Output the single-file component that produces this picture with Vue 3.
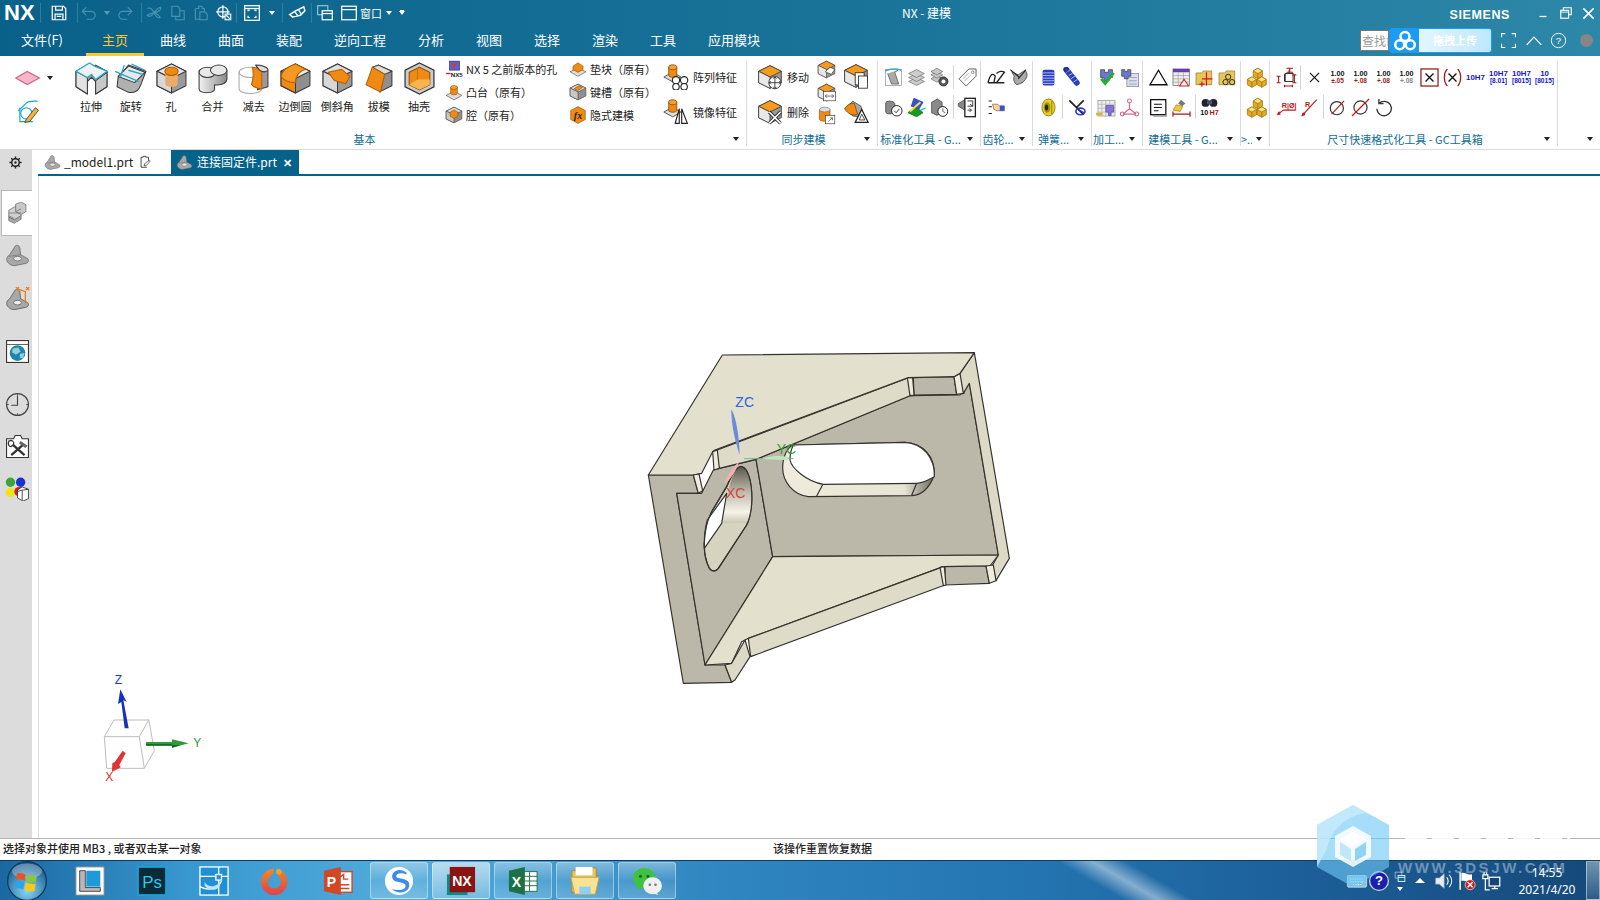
<script setup>
import { h } from 'vue'

const L = 'stroke="#3a3a3a" stroke-width="1" stroke-linejoin="round"'
const cube = (t, l, r, extra = '') =>
  `<path d="M16 2L30 9V23L16 30L2 23V9Z" fill="${r}" ${L}/><path d="M16 2L30 9L16 16L2 9Z" fill="${t}" ${L}/><path d="M2 9L16 16V30L2 23Z" fill="${l}" ${L}/>${extra}`
const wl = 'fill="none" stroke="#fff" stroke-width="2.2"'
const dl = 'fill="none" stroke="#4a93b0" stroke-width="2"'
const T = (x, y, s, c, fs, w = 700) =>
  `<text x="${x}" y="${y}" font-size="${fs}" font-weight="${w}" fill="${c}" text-anchor="middle" font-family="Liberation Sans, sans-serif">${s}</text>`
const tol = (a, b, c2 = '#a01818') => T(16, 13, '1.00', '#111', 11) + T(16, 25, b, c2, 10)
const folder = '<path d="M3 9H12L14 6H27V27H3Z" fill="#e6c65a" stroke="#8a7430"/>'
const yb = (x, y) => `<g transform="translate(${x} ${y})"><path d="M7 0L14 4V12L7 16L0 12V4Z" fill="#e8a820" stroke="#8a6a10"/><path d="M7 0L14 4L7 8L0 4Z" fill="#fbe27a" stroke="#8a6a10"/><path d="M7 8V16" stroke="#8a6a10"/></g>`

const icons = {
  save: `<path d="M4 4H24L28 8V28H4Z" ${wl}/><path d="M10 4V11H22V4M9 28V18H23V28M12 22H20" ${wl}/>`,
  undo: `<path d="M11 6L4 13L11 20M4 13H20A7 7 0 0 1 20 27H12" ${dl}/>`,
  redo: `<path d="M21 6L28 13L21 20M28 13H12A7 7 0 0 0 12 27H20" ${dl}/>`,
  cut: `<path d="M4 8C10 5 13 10 16 15C13 21 8 24 4 20C8 18 11 17 16 15C20 11 23 6 28 6C29 11 25 14 16 15C20 18 25 19 27 24C22 26 18 21 16 15" ${dl}/>`,
  copy: `<path d="M5 4H16L19 8V22H5ZM12 22V28H27V12H19" ${dl}/>`,
  paste: `<path d="M6 8H12V4H18V8H22V14M6 8V27H14M14 14H23L27 18V28H14Z" ${dl}/>`,
  snap: `<circle cx="14" cy="14" r="9" ${wl}/><path d="M14 2V26M2 14H26" ${wl}/><rect x="18" y="18" width="10" height="10" fill="#0f6a8f" stroke="#fff" stroke-width="2"/><path d="M20 20L26 26" ${wl}/>`,
  fit: `<rect x="3" y="3" width="26" height="26" ${wl}/><path d="M3 8H29" ${wl}/><path d="M9 13V11H12M23 13V11H20M9 21V24H12M23 21V24H20" ${wl}/>`,
  link: `<path d="M3 19L14 12L20 9L28 5L30 12L22 20L14 22L8 23Z" fill="none" stroke="#fff" stroke-width="2.6"/><path d="M12 14L17 20M19 11L23 17" ${wl}/>`,
  win1: `<rect x="3" y="3" width="18" height="16" fill="none" stroke="#9cc6d6" stroke-width="2"/><rect x="11" y="12" width="18" height="16" fill="#0f6a8f" stroke="#fff" stroke-width="2.2"/><path d="M11 17H29" ${wl}/>`,
  win2: `<rect x="3" y="4" width="26" height="24" ${wl}/><path d="M3 10H29" ${wl}/>`,
  plane: `<path d="M1 16L15 8L30 16L15 24Z" fill="#f6b8c8" stroke="#d8608a" stroke-width="1.5"/>`,
  sketch: `<path d="M4 16L14 6C18 3 24 4 28 4M6 12V29H22" fill="none" stroke="#12a5d8" stroke-width="1.4"/><circle cx="14" cy="19" r="7" fill="none" stroke="#12a5d8" stroke-width="1.4"/><path d="M14 26L25 12L29 15L18 29L12 30Z" fill="#f4b43a" stroke="#333"/>`,
  extrude: `<path d="M1 9L12 3L16 6L20 3L31 9V24L20 31L20 19L16 15L12 19V31L1 24Z" fill="#9a9a9a" ${L}/><path d="M1 9L12 15V31L1 24Z" fill="#e2e2e2" ${L}/><path d="M20 18L31 10V24L20 31Z" fill="#c8c8c8" ${L}/><path d="M1 9L14 1L19 4L31 9L20 17L16 12L12 15Z" fill="#f0f0f0" stroke="#22a8cf" stroke-width="1.2"/>`,
  revolve: `<path d="M4 15L14 3L31 9L26 22C24 28 20 31 13 29L3 24Z" fill="#b0b0b0" ${L}/><path d="M4 14L14 4L30 10L20 20Z" fill="#e8e8e8" ${L}/><path d="M1 9L24 19M10 3L6 15M17 2L30 8M14 8L28 12" fill="none" stroke="#22a8cf" stroke-width="1.3"/>`,
  hole: cube('#e8e8e8', '#d8d8d8', '#9a9a9a', '<path d="M10 9V21C10 25 22 25 22 21V9Z" fill="#e8ad6a"/><ellipse cx="16" cy="9" rx="6.5" ry="4" fill="#f08a12" stroke="#b85a00"/>'),
  unite: `<path d="M3 11V26C3 31 18 31 18 26L18 22C26 23 30 20 30 16V8H3Z" fill="url(#gg)" ${L}/><ellipse cx="11" cy="10" rx="8" ry="5" fill="#e8e8e8" ${L}/><ellipse cx="22" cy="8" rx="8" ry="5" fill="#e8e8e8" ${L}/>`,
  subtract: `<path d="M19 4C24 3 30 5 30 9V24L20 27V8Z" fill="#9a9a9a" ${L}/><ellipse cx="13" cy="10" rx="11" ry="5" fill="none" stroke="#aaa"/><path d="M2 10V26C2 32 24 32 24 26V10" fill="none" stroke="#aaa"/><path d="M15 5C21 6 24 8 24 10V26C20 26 17 25 14 22C16 17 16 9 15 5Z" fill="#f08a12" stroke="#b85a00"/><path d="M18 3C24 3 30 5 30 8C28 10 25 10 22 8Z" fill="#ddd" ${L}/>`,
  blend: cube('#e8e8e8', '#f08a12', '#8f8f8f', '<path d="M2 14C3 8 10 4 16 2L26 7C19 9 16 14 16 20C10 20 5 18 2 14Z" fill="#f49a20" stroke="#b85a00"/>'),
  chamfer: cube('#e0e0e0', '#d8d8d8', '#9a9a9a', '<path d="M7 10L20 7L28 14L24 21L13 18Z" fill="#f08a12" stroke="#b85a00"/>'),
  draft: `<path d="M16 3L29 9V23L17 29Z" fill="#8f8f8f" ${L}/><path d="M10 5L16 3L29 9L22 12Z" fill="#ddd" ${L}/><path d="M10 5L22 12L18 29L4 22Z" fill="#f08a12" stroke="#b85a00"/>`,
  shell: `<path d="M16 1L30 8V24L16 31L2 24V8Z" fill="#ccc" stroke="#333" stroke-width="1.2"/><path d="M16 5L26 10V22L16 27L6 22V10Z" fill="#f08a12" stroke="#8a4a00"/><path d="M6 22L14 17H26V22L16 27Z" fill="#f8b450"/><path d="M14 6V17" stroke="#c96e00"/>`,
  nx5: `<rect x="8" y="2" width="18" height="16" fill="#5a62d8" stroke="#223"/><rect x="13" y="6" width="7" height="7" fill="#d83838"/><path d="M2 24H10" stroke="#d01818" stroke-width="2.4"/>${T(21, 30, 'NX5', '#223', 11)}`,
  boss: `<path d="M2 22L16 15L30 22L16 30Z" fill="#ddd" ${L}/><path d="M10 8V18C10 22 22 22 22 18V8Z" fill="#f08a12" stroke="#8a4a00"/><ellipse cx="16" cy="8" rx="6" ry="3.5" fill="#f8a030" stroke="#8a4a00"/>`,
  pocket: cube('#d8d8d8', '#c8c8c8', '#909090', '<path d="M9 11L16 7L23 11V18L16 22L9 18Z" fill="#f08a12" stroke="#8a4a00"/>'),
  pad: `<path d="M2 21L16 14L30 21L16 29Z" fill="#ddd" ${L}/><path d="M7 11L16 5L25 11V17L16 22L7 17Z" fill="#f08a12" stroke="#8a4a00"/>`,
  slot: cube('#d8d8d8', '#c8c8c8', '#909090', '<path d="M9 10L18 5L24 8L15 14Z" fill="#f08a12" stroke="#8a4a00"/>'),
  fx: `<path d="M16 1L29 8V24L16 31L3 24V8Z" fill="#f08a12" stroke="#8a4a00"/><text x="16" y="23" font-size="18" font-style="italic" font-weight="700" text-anchor="middle" font-family="Liberation Serif, serif" fill="#222">fx</text>`,
  pattern: `<path d="M1 16L12 10L22 16L12 22Z" fill="#ddd" ${L}/><path d="M7 4V14C7 17 17 17 17 14V4Z" fill="#f08a12" stroke="#8a4a00"/><ellipse cx="12" cy="4" rx="5" ry="3" fill="#f8a030" stroke="#8a4a00"/><g fill="#fff" stroke="#222" stroke-width="1.4"><circle cx="16" cy="20" r="4.5"/><circle cx="26" cy="20" r="4.5"/><circle cx="16" cy="28" r="4"/><circle cx="26" cy="28" r="4"/></g>`,
  mirror: `<path d="M1 16L12 10L22 16L12 22Z" fill="#ddd" ${L}/><path d="M7 4V14C7 17 17 17 17 14V4Z" fill="#f08a12" stroke="#8a4a00"/><ellipse cx="12" cy="4" rx="5" ry="3" fill="#f8a030" stroke="#8a4a00"/><path d="M15 30L20 12V30ZM23 30V12L30 30Z" fill="#fff" stroke="#222" stroke-width="1.4"/>`,
  move: cube('#f79a1e', '#e8e8e8', '#989898', '<circle cx="22" cy="23" r="7.5" fill="#fff" stroke="#222"/><path d="M22 16V30M15 23H29M20 18L22 16L24 18M20 28L22 30L24 28M17 21L15 23L17 25M27 21L29 23L27 25" fill="none" stroke="#222"/>'),
  del: cube('#f79a1e', '#e8e8e8', '#989898', '<path d="M15 16L29 30M29 16L15 30" stroke="#222" stroke-width="4"/><path d="M15 16L29 30M29 16L15 30" stroke="#fff" stroke-width="2"/>'),
  sy1: cube('#f79a1e', '#e8e8e8', '#989898', '<path d="M14 20L22 12L30 16L24 24Z" fill="#fff" stroke="#222"/>'),
  sy2: cube('#f79a1e', '#e8e8e8', '#989898', '<rect x="11" y="14" width="20" height="16" fill="#fff" stroke="#222"/><path d="M14 22H28M14 22L17 19M14 22L17 25M28 22L25 19M28 22L25 25" fill="none" stroke="#222"/>'),
  sy3: `<path d="M4 6V22C4 27 22 27 22 22V6Z" fill="#f08a12" stroke="#8a4a00"/><ellipse cx="13" cy="6" rx="9" ry="4" fill="#ddd" stroke="#666"/><rect x="14" y="16" width="16" height="14" fill="#fff" stroke="#222"/><path d="M19 26L26 20M22 20H26V24" fill="none" stroke="#222"/>`,
  sy4: cube('#f79a1e', '#e8e8e8', '#989898', '<rect x="15" y="12" width="11" height="15" fill="#fff" stroke="#222"/><rect x="19" y="16" width="11" height="15" fill="#fff" stroke="#222"/>'),
  sy5: `<path d="M2 13L12 4L22 10L26 24L12 22Z" fill="#a8a8a8" ${L}/><path d="M2 13C6 8 10 6 14 7L18 20C12 22 6 20 2 13Z" fill="#f08a12" stroke="#8a4a00"/><path d="M15 30L23 14L31 30Z" fill="#fff" stroke="#222" stroke-width="1.5"/><path d="M20 27L23 20L27 27Z" fill="none" stroke="#222"/>`,
  a1: `<path d="M7 10L13 26L24 26L18 8L24 4" fill="#aaa" stroke="#444"/><rect x="4" y="4" width="24" height="24" fill="none" stroke="#888"/><path d="M4 6C12 2 20 2 28 5" fill="none" stroke="#22a8cf" stroke-width="2"/>`,
  a2: `<g fill="#ccc" stroke="#666"><path d="M4 22L16 16L28 22L16 28Z"/><path d="M4 16L16 10L28 16L16 22Z"/><path d="M4 10L16 4L28 10L16 16Z"/></g>`,
  a3: `<g fill="#c8c8c8" stroke="#666"><path d="M3 18L12 13L21 18L12 23Z"/><path d="M3 12L12 7L21 12L12 17Z"/><path d="M3 7L12 2L21 7L12 12Z"/></g><circle cx="22" cy="22" r="7" fill="#555" stroke="#222"/><circle cx="22" cy="22" r="3" fill="#fff"/>`,
  a4: `<path d="M3 18L18 3H29V14L14 29Z" fill="#fff" stroke="#555" stroke-width="1.4"/><circle cx="24" cy="8" r="2" fill="none" stroke="#555"/><path d="M9 18L18 9M12 21L21 12" stroke="#888"/>`,
  a5: `<path d="M4 10C4 5 16 5 18 10V22C16 27 4 27 4 22Z" fill="#8a8a8a" stroke="#333"/><circle cx="21" cy="21" r="8" fill="#fff" stroke="#222" stroke-width="1.5"/><path d="M17 21L20 24L25 18" fill="none" stroke="#222" stroke-width="1.4"/>`,
  a6: `<path d="M3 24L14 14L26 24L16 30Z" fill="#1a9a20" stroke="#0a5a10"/><path d="M12 2L26 8L20 18L8 14Z" fill="#3a52d8" stroke="#1a2a90"/><path d="M6 22L22 8" stroke="#f4e040" stroke-width="3"/><path d="M22 20L30 17" stroke="#22c8d8" stroke-width="2"/>`,
  a7: `<path d="M4 8L13 3L20 8V24L12 28L4 24Z" fill="#8a8a8a" stroke="#333"/><circle cx="21" cy="22" r="7.5" fill="#fff" stroke="#222" stroke-width="1.5"/><path d="M21 17V22L25 24" fill="none" stroke="#222"/>`,
  a8: `<path d="M2 10L12 4V20L2 14Z" fill="#888" stroke="#333"/><rect x="12" y="2" width="16" height="28" fill="#fff" stroke="#222" stroke-width="2"/><path d="M16 6H24V14H16M24 14L20 11M16 20H22M22 20L19 17M22 20L19 23" fill="none" stroke="#222" stroke-width="1.3"/>`,
  g1: `<path d="M3 24C6 12 10 8 14 14L12 24M3 24H28M16 10C20 6 26 6 28 8L16 24" fill="none" stroke="#222" stroke-width="2"/>`,
  g2: `<path d="M4 7L14 12L24 5C30 10 28 18 20 24L12 27C8 24 6 20 8 14Z" fill="#aaa" stroke="#222"/><path d="M2 4L16 16M26 4L14 18" stroke="#222" stroke-width="1.6"/>`,
  g3: `<path d="M4 6H9M4 15H9M4 25H9" stroke="#222" stroke-width="1.6"/><path d="M10 11H18L21 14H28V21H17L12 19Z" fill="#f2d2a0" stroke="#8a5a20"/><rect x="21" y="13" width="7" height="8" fill="#3a52d8"/>`,
  s1: `<rect x="7" y="4" width="18" height="24" rx="3" fill="#2a3ec0"/><path d="M7 9H25M7 13H25M7 17H25M7 21H25M7 25H25" stroke="#b8c4f4" stroke-width="1.4"/>`,
  s2: `<path d="M8 4L24 24" stroke="#2a3ec0" stroke-width="9" stroke-linecap="round"/><path d="M8 8L14 4M12 13L18 9M15 18L21 14M19 23L25 19" stroke="#c0c8f8" stroke-width="1.4"/><circle cx="8" cy="4" r="3" fill="none" stroke="#222"/>`,
  s3: `<ellipse cx="16" cy="16" rx="10" ry="13" fill="#e8d020" stroke="#6a5a00"/><ellipse cx="14" cy="16" rx="5" ry="8" fill="#a89000"/><ellipse cx="13" cy="16" rx="2.5" ry="4.5" fill="#222"/><path d="M21 6V26" stroke="#6a5a00"/>`,
  s4: `<path d="M5 5L27 27M27 5L16 16" stroke="#222" stroke-width="2.6"/><ellipse cx="22" cy="22" rx="7" ry="5" fill="none" stroke="#2a3ec0" stroke-width="2.4"/><path d="M16 18L28 24" stroke="#2a3ec0" stroke-width="1.6"/>`,
  m1: `<path d="M7 4H13V8H19V4H25V16H20V21H12V16H7Z" fill="#6a7ac8" stroke="#334"/><path d="M8 18L14 25L27 9" fill="none" stroke="#22b030" stroke-width="4.4"/>`,
  m2: `<rect x="12" y="10" width="18" height="20" fill="#d8e0ef" stroke="#778"/><path d="M15 16H27M15 21H27M15 26H27" stroke="#889"/><path d="M4 4H9V7H13V4H18V14H14V18H8V14H4Z" fill="#6a7ac8" stroke="#334"/>`,
  m3: `<rect x="3" y="5" width="26" height="24" fill="#eee" stroke="#888"/><path d="M3 11H29M3 17H29M3 23H29M9 5V29M15 5V29M21 5V29" stroke="#aaa"/><path d="M0 26H10" stroke="#d8b830" stroke-width="4"/><path d="M15 13H27V23H23V28H19V23H15Z" fill="#8a72d8" stroke="#449"/>`,
  m4: `<path d="M16 8V18M16 18L6 26M16 18L26 26M6 26H26" fill="none" stroke="#d8688a" stroke-width="1.8"/><circle cx="16" cy="6" r="3" fill="none" stroke="#d8688a" stroke-width="1.6"/><circle cx="5" cy="26" r="3" fill="none" stroke="#d8688a" stroke-width="1.6"/><circle cx="27" cy="26" r="3" fill="none" stroke="#d8688a" stroke-width="1.6"/>`,
  b1: `<path d="M16 5L29 27H3Z" fill="none" stroke="#111" stroke-width="2"/>`,
  b2: `<rect x="3" y="3" width="25" height="25" fill="#eee" stroke="#555"/><rect x="3" y="3" width="25" height="5" fill="#6a3ab0"/><path d="M3 13H28M3 18H28M3 23H28M11 8V28M19 8V28" stroke="#999"/><path d="M20 19L27 29H13Z" fill="#fff" stroke="#d01818" stroke-width="1.6"/>`,
  b3: `${folder}<path d="M19 8V28M12 18H28M8 26H16M12 22V30" stroke="#d01818" stroke-width="1.8"/>`,
  b4: `${folder}<g fill="none" stroke="#222" stroke-width="1.4"><circle cx="17" cy="15" r="4"/><circle cx="13" cy="23" r="4"/><circle cx="23" cy="23" r="4"/></g>`,
  b5: `<rect x="4" y="4" width="23" height="23" fill="#fff" stroke="#111" stroke-width="2"/><path d="M9 11H21M9 16H21M9 21H16" stroke="#111" stroke-width="1.6"/><path d="M28 8V29H8" stroke="#999" stroke-width="2" fill="none"/>`,
  b6: `<path d="M15 4L22 10L17 14L11 10Z" fill="#777"/><path d="M8 12L18 14L14 22L3 20Z" fill="#f0c63a" stroke="#9a7a10"/><path d="M3 22V30M29 22V30M3 26H29" stroke="#b01010" stroke-width="1.8"/>`,
  b7: `<circle cx="10" cy="9" r="6" fill="#223"/><circle cx="22" cy="9" r="6" fill="#223"/><rect x="12" y="5" width="8" height="6" fill="#456"/>${T(8, 27, '10', '#111', 11)}${T(23, 27, 'H7', '#b01010', 11)}`,
  y: yb(11, 2) + yb(2, 15) + yb(17, 15),
  d1: `<path d="M13 22V12H20V4" fill="none" stroke="#333" stroke-width="1.6"/><rect x="14" y="10" width="12" height="12" fill="#fff" stroke="#222" stroke-width="1.4"/><path d="M16 2H26M16 8H26M21 2V8M4 14V24M1 14H7M1 24H7M28 12V24M25 12H31M25 24H31M13 27V31M13 29H25M25 27V31" fill="none" stroke="#b01010" stroke-width="1.6"/>`,
  xx: `<path d="M9 9L23 23M23 9L9 23" stroke="#111" stroke-width="1.8"/>`,
  t1: tol('', '±.05'), t2: tol('', '+.08'), t3: tol('', '+.08'), t4: tol('', '+.08', '#888'),
  bx: `<rect x="3" y="3" width="26" height="26" fill="#fff" stroke="#8a0f0f" stroke-width="1.8"/><path d="M10 10L22 22M22 10L10 22" stroke="#111" stroke-width="2"/>`,
  px: `<path d="M8 3C2 10 2 22 8 29M24 3C30 10 30 22 24 29" fill="none" stroke="#a01818" stroke-width="1.8"/><path d="M10 10L22 22M22 10L10 22" stroke="#111" stroke-width="2"/>`,
  h1: T(16, 20, '10H7', '#1414c8', 12),
  h2: T(16, 13, '10H7', '#1414c8', 12) + T(16, 25, '[8.01]', '#1414c8', 10),
  h3: T(16, 13, '10H7', '#1414c8', 12) + T(16, 25, '[8015]', '#1414c8', 10),
  h4: T(16, 13, '10', '#1414c8', 12) + T(16, 25, '[8015]', '#1414c8', 10),
  r1: `<path d="M2 27L11 20M2 27L5 22M2 27L7 26M11 20H30" fill="none" stroke="#c01818" stroke-width="1.6"/>${T(20, 16, 'R|Ø|', '#c01818', 11)}`,
  r2: `<path d="M4 29L27 4" stroke="#c01818" stroke-width="1.8"/><circle cx="7" cy="26" r="2.5" fill="#c01818"/>${T(13, 15, 'R', '#c01818', 11)}`,
  o1: `<circle cx="15" cy="17" r="10" fill="none" stroke="#333" stroke-width="1.8"/><path d="M7 26L26 6" stroke="#c01818" stroke-width="1.8"/>`,
  o2: `<circle cx="16" cy="16" r="10" fill="none" stroke="#333" stroke-width="1.8"/><path d="M3 29L29 3" stroke="#c01818" stroke-width="1.8"/>`,
  rot: `<path d="M9 10A11 11 0 1 1 6 18M9 3V10H16" fill="none" stroke="#333" stroke-width="2"/>`,
  gear: `<circle cx="16" cy="16" r="8" fill="none" stroke="#222" stroke-width="3"/><circle cx="16" cy="16" r="2.5" fill="#222"/><path d="M16 3V8M16 24V29M3 16H8M24 16H29M7 7L10 10M22 22L25 25M7 25L10 22M22 10L25 7" stroke="#222" stroke-width="3"/>`,
  part: `<path d="M3 24C1 20 3 17 6 15L13 4C15 2 18 3 19 6L20 15L29 20C31 22 30 25 27 26L12 29C8 29 5 27 3 24Z" fill="#a8a8a8" stroke="#666"/><ellipse cx="16" cy="20" rx="5" ry="3" fill="#e8e8e8" stroke="#666"/><path d="M5 17L20 15" stroke="#777"/>`,
  doc: `<path d="M7 5H12V3H18V5H24V14M7 5V28H20" fill="none" stroke="#333" stroke-width="2"/><path d="M15 20L26 12L28 14L19 24L14 25Z" fill="#fff" stroke="#333" stroke-width="1.6"/>`,
  blocks: `<path d="M4 12L14 6L22 10V20L12 26L4 22Z" fill="#d0d0d0" stroke="#666"/><path d="M14 3L22 0L29 4V14L22 18L14 14Z" fill="#c8c8c8" stroke="#666"/><path d="M4 16L22 16M4 20L12 24M14 14L22 10" fill="none" stroke="#666"/><path d="M4 22V27L12 31L22 25V20L12 26Z" fill="#aaa" stroke="#666"/>`,
  ptd: `<path d="M3 24C1 20 3 17 6 15L13 4C15 2 18 3 19 6L20 15L29 20C31 22 30 25 27 26L12 29C8 29 5 27 3 24Z" fill="#a8a8a8" stroke="#555"/><ellipse cx="16" cy="20" rx="5" ry="3" fill="#eee" stroke="#555"/><path d="M15 2L26 6V20M27 0L31 4M31 0L27 4M14 4L18 0M14 0L18 4" fill="none" stroke="#f07810" stroke-width="1.6"/>`,
  web: `<rect x="2" y="2" width="28" height="28" fill="#fff" stroke="#333" stroke-width="1.4"/><path d="M2 7H30" stroke="#333"/><circle cx="16" cy="18" r="10" fill="#1f86a8"/><path d="M10 12L17 11L20 16L14 20L9 17ZM19 19L25 18L23 25L19 24Z" fill="#8fd0dc"/>`,
  clock: `<circle cx="16" cy="16" r="14" fill="none" stroke="#444" stroke-width="1.5"/><path d="M16 5V17H8" fill="none" stroke="#444" stroke-width="1.5"/><path d="M16 2V5M16 27V30M2 16H5M27 16H30" stroke="#444"/>`,
  tools: `<path d="M2 6H11L13 2H20L22 6H30V30H2Z" fill="#fff" stroke="#333" stroke-width="1.4"/><path d="M8 12L25 27" stroke="#333" stroke-width="3"/><path d="M24 13L8 27" stroke="#333" stroke-width="3"/><path d="M20 9L29 15L26 18L18 12Z" fill="#666"/><path d="M5 9C9 7 12 10 11 13L8 16C5 16 3 13 5 9Z" fill="#fff" stroke="#333" stroke-width="1.6"/>`,
  roles: `<circle cx="7" cy="8" r="6" fill="#3aa53a"/><circle cx="20" cy="8" r="6" fill="#1a30d0"/><circle cx="7" cy="21" r="6" fill="#f0e418"/><circle cx="18" cy="20" r="6" fill="#e01818"/><path d="M16 18L22 14L30 17V29L23 32L16 28Z" fill="#fff" stroke="#222"/><path d="M22 18V31M16 20L22 18L30 17" stroke="#222" fill="none"/>`,
  orb: `<circle cx="16" cy="16" r="15.5" fill="url(#orb)" stroke="#0d3a5e"/><ellipse cx="16" cy="8" rx="12" ry="6" fill="#fff" opacity=".3"/><path d="M8 10C10 9 13 10 15 11L14 16C12 15 10 14 7 15Z" fill="#e8542a"/><path d="M16 11C18 12 22 12 24 11L23 17C20 18 17 17 15 16Z" fill="#8cc63f"/><path d="M7 16C10 15 12 16 14 17L13 23C11 22 9 21 6 22Z" fill="#2aa5e8"/><path d="M15 17C17 18 20 19 23 18L22 24C19 25 16 24 14 23Z" fill="#f8c81a"/>`,
  app1: `<rect x="1" y="1" width="30" height="30" fill="#fff" stroke="#8a8a8a"/><path d="M5 5H11V23H27V27H5Z" fill="#b8b8b8" stroke="#444"/><rect x="12" y="5" width="15" height="17" fill="#1f9ad8"/>`,
  ps: `<rect x="1" y="1" width="30" height="30" fill="#0a2a38" stroke="#18a0d8" stroke-width="2"/><text x="16" y="23" font-size="18" text-anchor="middle" font-family="Liberation Sans, sans-serif" fill="#31c5f0">Ps</text>`,
  ac: `<rect x="1" y="1" width="30" height="30" fill="#1f8fd8" stroke="#fff" stroke-width="1.4"/><path d="M1 11H31M21 1V31M1 22C10 27 20 25 24 16" fill="none" stroke="#fff" stroke-width="1.4"/><path d="M6 17C10 24 20 23 23 15L22 22C18 27 10 26 6 21Z" fill="#bfe6f8"/><rect x="18" y="9" width="6" height="6" fill="#1f8fd8" stroke="#fff" stroke-width="1.4"/>`,
  ring: `<path d="M14 3A14 14 0 1 0 28 16C28 10 24 6 20 4L18 11C21 13 22 15 21 18A7 7 0 1 1 12 10Z" fill="url(#ringg)"/><circle cx="19" cy="6" r="3" fill="#f0a030"/>`,
  ppt: `<rect x="14" y="6" width="17" height="22" fill="#fff" stroke="#d24726" stroke-width="1.5"/><path d="M18 12L22 9V14H27M18 20H28M18 24H28" fill="none" stroke="#d24726" stroke-width="1.5"/><path d="M1 5L19 1V31L1 27Z" fill="#d24726"/><text x="9" y="22" font-size="15" font-weight="700" text-anchor="middle" font-family="Liberation Sans, sans-serif" fill="#fff">P</text>`,
  sogou: `<circle cx="16" cy="16" r="15" fill="#fff"/><path d="M24 7C16 1 7 6 9 13C11 19 23 16 23 21C23 26 14 27 8 24C14 31 27 29 27 20C27 12 14 15 13 11C13 7 20 7 24 9Z" fill="#3a8ce8"/>`,
  nxb: `<rect x="1" y="9" width="22" height="22" fill="#0f8a8a"/><rect x="4" y="1" width="27" height="27" fill="#8c1410"/><text x="17" y="21" font-size="15" font-weight="700" text-anchor="middle" font-family="Liberation Sans, sans-serif" fill="#fff">NX</text>`,
  xls: `<rect x="15" y="6" width="16" height="21" fill="#fff" stroke="#1e7145"/><path d="M15 11H31M15 16H31M15 21H31M23 6V27" stroke="#1e7145"/><path d="M1 5L18 1V31L1 27Z" fill="#1e7145"/><text x="9" y="22" font-size="15" font-weight="700" text-anchor="middle" font-family="Liberation Sans, sans-serif" fill="#fff">X</text>`,
  fold: `<path d="M2 5H11L13 2H28V28H2Z" fill="#e8c45a" stroke="#a8893a"/><path d="M6 1H24V10H6Z" fill="#fff"/><path d="M1 12H31L27 30H5Z" fill="#f8e294" stroke="#c8a54a"/><rect x="10" y="22" width="12" height="8" fill="#8fd0f0"/>`,
  wx: `<ellipse cx="13" cy="13" rx="12" ry="11" fill="#3fc33f"/><path d="M6 20L5 26L11 22Z" fill="#3fc33f"/><circle cx="9" cy="11" r="1.6" fill="#14632a"/><circle cx="17" cy="11" r="1.6" fill="#14632a"/><ellipse cx="22" cy="21" rx="10" ry="9" fill="#f0f0f0"/><path d="M26 28L28 31L22 29Z" fill="#f0f0f0"/><circle cx="19" cy="20" r="1.4" fill="#777"/><circle cx="25" cy="20" r="1.4" fill="#777"/>`,
  kb: `<rect x="2" y="8" width="28" height="17" rx="2" fill="#7fc4e4" stroke="#d8eef8"/><path d="M6 13H26M6 17H26M10 21H22" stroke="#fff" stroke-width="1.6" stroke-dasharray="2 1.4"/>`,
  help: `<circle cx="16" cy="16" r="15" fill="#1a1fb0" stroke="#d8d8d8" stroke-width="2"/><text x="16" y="23" font-size="21" font-weight="700" text-anchor="middle" font-family="Liberation Sans, sans-serif" fill="#fff">?</text>`,
  spk: `<path d="M4 11H10L18 4V28L10 21H4Z" fill="#e6edf2" stroke="#7a8fa0"/><path d="M22 10C25 14 25 18 22 22M26 6C31 12 31 20 26 26" fill="none" stroke="#fff" stroke-width="1.8"/>`,
  flag: `<path d="M5 2V30" stroke="#fff" stroke-width="2.4"/><path d="M7 3C14 2 16 7 24 5V17C16 19 14 14 7 16Z" fill="#fff"/><circle cx="21" cy="22" r="8" fill="#d81818" stroke="#fff"/><path d="M17 18L25 26M25 18L17 26" stroke="#fff" stroke-width="2.4"/>`,
  net: `<rect x="13" y="10" width="17" height="14" fill="#16466f" stroke="#fff" stroke-width="2"/><path d="M17 28H27M22 24V28" stroke="#fff" stroke-width="2"/><path d="M3 6H11V12H3ZM5 2V6M9 2V6M7 12V30H14" fill="none" stroke="#fff" stroke-width="2"/>`,
  cloud: `<g fill="none" stroke="#fff" stroke-width="3.4"><circle cx="16" cy="10" r="6"/><circle cx="9" cy="21" r="6"/><circle cx="23" cy="21" r="6"/></g>`,
  full: `<path d="M3 10V3H10M22 3H29V10M3 22V29H10M22 29H29V22" fill="none" stroke="#fff" stroke-width="2"/>`,
  up: `<path d="M3 23L16 9L29 23" fill="none" stroke="#fff" stroke-width="2"/>`,
  q: `<circle cx="16" cy="16" r="13.5" fill="none" stroke="#fff" stroke-width="1.8"/><text x="16" y="22" font-size="18" text-anchor="middle" font-family="Liberation Sans, sans-serif" fill="#fff">?</text>`,
  min: `<path d="M8 24H24" stroke="#fff" stroke-width="3"/>`,
  res: `<path d="M10 10V4H28V20H22" fill="none" stroke="#fff" stroke-width="2.6"/><rect x="4" y="10" width="18" height="18" fill="none" stroke="#fff" stroke-width="2.6"/><path d="M4 14H22" stroke="#fff" stroke-width="2"/>`,
  close: `<path d="M5 5L27 27M27 5L5 27" stroke="#fff" stroke-width="3.4"/>`,
}

const Ic = (p) => h('svg', { viewBox: '0 0 32 32', width: p.s, height: p.s, innerHTML: icons[p.n] })
Ic.props = ['n', 's']

const quick = [
  { w: 36, n: 'save' }, { sep: 1 }, { w: 22, n: 'undo' }, { w: 14, dd: 1, dim: 1 }, { w: 22, n: 'redo' }, { sep: 1, g: 5 },
  { w: 24, n: 'cut' }, { w: 24, n: 'copy' }, { w: 22, n: 'paste' }, { w: 24, n: 'snap' }, { sep: 1 },
  { w: 30, n: 'fit' }, { w: 10, dd: 1 }, { sep: 1, g: 5 }, { w: 28, n: 'link' }, { sep: 1 },
  { w: 26, n: 'win1' }, { w: 22, n: 'win2' }, { t: '窗口' }, { w: 14, dd: 1 }, { w: 12, dd: 1, bar: 1 },
]
const menus = ['曲线', '曲面', '装配', '逆向工程', '分析', '视图', '选择', '渲染', '工具', '应用模块']
const bigs = [
  ['extrude', '拉伸', 40], ['revolve', '旋转', 39.5], ['hole', '孔', 41], ['unite', '合并', 42], ['subtract', '减去', 40.5],
  ['blend', '边倒圆', 42], ['chamfer', '倒斜角', 42.5], ['draft', '拔模', 40.5], ['shell', '抽壳', 40],
]
const list1 = [['nx5', 'NX 5 之前版本的孔'], ['boss', '凸台（原有）'], ['pocket', '腔（原有）']]
const list2 = [['pad', '垫块（原有）'], ['slot', '键槽（原有）'], ['fx', '隐式建模']]
const list3 = [['pattern', '阵列特征'], ['mirror', '镜像特征']]
const cellGroups = [
  { w: 103, pad: 3.5, label: '标准化工具 - G...', rows: [['a1', 'a2', 'a3', '|', 'a4'], ['a5', 'a6', 'a7', '|', 'a8']] },
  { w: 52, pad: 3.5, label: '齿轮...', rows: [['g1', 'g2'], ['g3']] },
  { w: 59, pad: 4, label: '弹簧...', rows: [['s1', 's2'], ['s3', '|', 's4']] },
  { w: 51, pad: 3, label: '加工...', rows: [['m1', 'm2'], ['m3', 'm4']] },
  { w: 98, pad: 4, label: '建模工具 - G...', rows: [['b1', 'b2', 'b3', 'b4'], ['b5', 'b6', '|', 'b7']] },
  { w: 29, pad: 3.5, label: '>..', rows: [['y'], ['y']] },
  { w: 288, pad: 4.5, label: '尺寸快速格式化工具 - GC工具箱', rows: [
    ['d1', '|', 'xx', 't1', 't2', 't3', 't4', 'bx', 'px', 'h1', 'h2', 'h3', 'h4'],
    ['r1', 'r2', '|', 'o1', 'o2', 'rot'],
  ] },
]
const side = [['part', 7], ['ptd', 19], ['web', 27], ['clock', 28], ['tools', 17], ['roles', 17]]
const plainApps = ['app1', 'ps', 'ac', 'ring', 'ppt']
const glassApps = [['sogou', 0], ['nxb', 1], ['xls', 0], ['fold', 0], ['wx', 0]]
const tray2 = ['spk', 'flag', 'net']
</script>

<template>
  <div class="app">
    <svg class="defs" width="0" height="0">
      <defs>
        <linearGradient id="gg" x1="0" x2="1"><stop offset="0" stop-color="#f2f2f2" /><stop offset="1" stop-color="#8a8a8a" /></linearGradient>
        <radialGradient id="orb" cx=".5" cy=".75" r=".75"><stop offset="0" stop-color="#8ad8fb" /><stop offset="1" stop-color="#104f82" /></radialGradient>
        <linearGradient id="ringg" x1="0" y1="0" x2="0" y2="1"><stop offset="0" stop-color="#f08a20" /><stop offset="1" stop-color="#e0404a" /></linearGradient>
        <linearGradient id="wall" x1="0" y1="0" x2="0" y2="1"><stop offset="0" stop-color="#5c5a50" /><stop offset=".45" stop-color="#bdbaac" /><stop offset=".8" stop-color="#f6f4e8" /><stop offset="1" stop-color="#c9c6b6" /></linearGradient>
        <linearGradient id="wall2" x1="0" x2="1"><stop offset="0" stop-color="#efecdd" /><stop offset=".8" stop-color="#e8e5d5" /><stop offset="1" stop-color="#6c6a60" /></linearGradient>
      </defs>
    </svg>

    <header class="head">
      <div class="title">
        <b class="logo">NX</b>
        <span class="qsep"></span>
        <template v-for="(q, i) in quick" :key="i">
          <span v-if="q.sep" class="qsep" :style="{ marginLeft: (q.g || 0) + 'px' }"></span>
          <span v-else-if="q.t" class="qtext">{{ q.t }}</span>
          <span v-else-if="q.dd" class="qcell" :style="{ width: q.w + 'px' }"><i class="tri" :class="{ dimtri: q.dim, bartri: q.bar }"></i></span>
          <span v-else class="qcell" :style="{ width: q.w + 'px' }"><Ic :n="q.n" :s="18" /></span>
        </template>
        <span class="wintitle">NX - 建模</span>
        <b class="siemens">SIEMENS</b>
        <span class="ctrl"><Ic n="min" :s="14" /></span>
        <span class="ctrl"><Ic n="res" :s="14" /></span>
        <span class="ctrl"><Ic n="close" :s="15" /></span>
      </div>
      <nav class="menu">
        <span class="mfile">文件(F)</span>
        <span class="mitem on">主页</span>
        <span v-for="m in menus" :key="m" class="mitem" :class="{ wide: m.length > 2 }">{{ m }}</span>
        <div class="mright">
          <span class="search">查找命令</span>
          <div class="pan">
            <span class="panic"><Ic n="cloud" :s="24" /></span>
            <span class="pantx">拖拽上传</span>
          </div>
          <span class="mbtn first"><Ic n="full" :s="17" /></span>
          <span class="mbtn"><Ic n="up" :s="18" /></span>
          <span class="mbtn"><Ic n="q" :s="17" /></span>
          <span class="dot"></span>
        </div>
      </nav>
    </header>

    <section class="ribbon">
      <div class="grp" style="width: 747px">
        <div class="body">
          <div class="leftcol">
            <div class="lr"><Ic n="plane" :s="26" /><i class="tri dark"></i></div>
            <div class="lr l2"><Ic n="sketch" :s="26" /></div>
          </div>
          <div v-for="b in bigs" :key="b[0]" class="big" :style="{ width: b[2] + 'px' }">
            <Ic :n="b[0]" :s="33" />
            <span>{{ b[1] }}</span>
          </div>
          <div class="list l1">
            <div v-for="r in list1" :key="r[0]" class="lrow"><Ic :n="r[0]" :s="18" /><span>{{ r[1] }}</span></div>
          </div>
          <div class="list l2c">
            <div v-for="r in list2" :key="r[0]" class="lrow"><Ic :n="r[0]" :s="18" /><span>{{ r[1] }}</span></div>
          </div>
          <div class="l3c">
            <div v-for="r in list3" :key="r[0]" class="mrow"><Ic :n="r[0]" :s="26" /><span>{{ r[1] }}</span></div>
          </div>
        </div>
        <div class="foot"><span>基本</span><i class="tri dark"></i></div>
      </div>

      <div class="grp" style="width: 131px">
        <div class="body sync">
          <div class="sc1">
            <div class="mrow"><Ic n="move" :s="26" /><span>移动</span></div>
            <div class="mrow"><Ic n="del" :s="26" /><span>删除</span></div>
          </div>
          <div class="sc2"><Ic n="sy1" :s="19" /><Ic n="sy2" :s="19" /><Ic n="sy3" :s="19" /></div>
          <div class="sc3"><Ic n="sy4" :s="26" /><Ic n="sy5" :s="26" /></div>
        </div>
        <div class="foot"><span>同步建模</span><i class="tri dark"></i></div>
      </div>

      <div v-for="g in cellGroups" :key="g.label" class="grp" :style="{ width: g.w + 'px' }">
        <div class="body cells" :style="{ paddingLeft: g.pad + 'px' }">
          <div v-for="(r, ri) in g.rows" :key="ri" class="crow">
            <template v-for="(c, ci) in r" :key="ci">
              <span v-if="c === '|'" class="csep"></span>
              <span v-else class="cell"><Ic :n="c" :s="21" /></span>
            </template>
          </div>
        </div>
        <div class="foot"><span>{{ g.label }}</span><i class="tri dark"></i></div>
      </div>

      <div class="grp last">
        <div class="body"></div>
        <div class="foot"><span></span><i class="tri dark"></i></div>
      </div>
    </section>

    <main class="work">
      <aside class="side">
        <div class="sgear"><Ic n="gear" :s="15" /></div>
        <div class="sactive"><Ic n="blocks" :s="22" /></div>
        <span v-for="s in side" :key="s[0]" class="sitem" :style="{ marginTop: s[1] + 'px' }"><Ic :n="s[0]" :s="25" /></span>
      </aside>
      <div class="mainc">
        <div class="tabs">
          <div class="tab">
            <Ic n="part" :s="17" />
            <span class="tabt">_model1.prt</span>
            <Ic n="doc" :s="14" />
          </div>
          <div class="tab act">
            <Ic n="part" :s="17" />
            <span class="tabt">连接固定件.prt</span>
            <b class="x">✕</b>
          </div>
        </div>
        <div class="canvas">
          <svg class="model" viewBox="0 0 1170 1080" width="390" height="360">
            <g stroke="#33322c" stroke-width="3.5" stroke-linejoin="round">
              <path d="M55 405L190 405L205 460L140 460L225 975L285 975L305 1027L160 1030Z" fill="#bbb8aa" />
              <path d="M140 460L215 460L250 390L268 385L378 358L428 650L225 975Z" fill="#bbb8aa" />
              <path d="M378 358L840 167L990 165L1018 130L1105 645L428 650Z" fill="#bbb8aa" />
              <path d="M248 335L835 113L850 167L840 167L378 358L268 385Z" fill="#dedbc9" />
              <path d="M850 113L972 110L980 163L852 165Z" fill="#bbb8aa" />
              <path d="M832 113L848 113L852 165L840 167Z" fill="#efecdd" />
              <path d="M972 110L992 100L1002 160L980 163Z" fill="#efecdd" />
              <path d="M1033 38L1138 655L1098 722L1088 675L1105 645L1018 130L1000 160L990 100Z" fill="#dcd9c7" />
              <path d="M55 405L277 45L1033 38L990 100L972 110L835 113L255 330L248 335L215 400L190 405Z" fill="#e3e0ce" />
              <path d="M428 650L1105 645L1080 678L940 680L355 895L335 905L305 970L225 975Z" fill="#e3e0ce" />
              <path d="M355 895L940 680L945 735L362 950Z" fill="#dedbc9" />
              <path d="M945 680L1068 678L1078 730L945 735Z" fill="#bbb8aa" />
              <path d="M930 682L943 680L948 735L940 737Z" fill="#efecdd" />
              <path d="M1068 678L1090 675L1098 722L1078 730Z" fill="#efecdd" />
              <path d="M345 900L360 950L315 1020L305 1027L285 975L305 970Z" fill="#dcd9c7" />
              <path d="M190 405L207 402L218 452L205 460Z" fill="#efecdd" />
              <path d="M248 335L262 330L268 385L252 390Z" fill="#efecdd" />
              <path d="M490 315L825 307C880 310 915 350 913 405C900 440 880 465 845 467L535 470C490 465 458 425 458 385C458 345 475 320 490 315Z" fill="url(#wall2)" />
              <path d="M490 315L825 307C880 310 915 355 913 410C895 420 880 430 860 430L580 433C530 425 485 385 480 360C480 340 485 325 490 315Z" fill="#fff" />
              <path d="M578 434L560 468M860 430L845 466" fill="none" />
              <path d="M335 380C355 385 368 430 365 490C362 530 355 545 350 555L265 685C258 695 245 695 238 685C228 665 222 640 223 610C224 575 232 540 245 515L290 440C305 405 320 378 335 380Z" fill="#d6d3c1" />
              <path d="M335 380C355 385 368 430 365 490C362 530 355 545 352 548L275 550L290 470C305 405 320 378 335 380Z" fill="url(#wall)" stroke="none" />
              <path d="M232 540L290 460L275 550L223 625C222 600 225 565 232 540Z" fill="#fff" />
              <path d="M335 380C355 385 368 430 365 490C362 530 355 545 350 555L265 685C258 695 245 695 238 685C228 665 222 640 223 610C224 575 232 540 245 515L290 440C305 405 320 378 335 380Z" fill="none" />
            </g>
            <path d="M304 208C320 235 328 300 329 345C316 305 304 260 304 208Z" fill="#6b8ad8" />
            <path d="M342 356H490" stroke="#6fbd78" stroke-width="3" />
            <path d="M395 358C420 346 450 346 478 352L470 360Z" fill="#bfe3c0" />
            <path d="M283 432C288 410 310 380 327 365C320 390 305 415 283 432Z" fill="#f2aeb0" />
            <text x="316" y="200" class="wcs" fill="#2a66e0">ZC</text>
            <text x="440" y="342" class="wcs" fill="#3a9a40">YC</text>
            <text x="288" y="474" class="wcs" fill="#d84040">XC</text>
          </svg>
          <svg class="triad" viewBox="0 0 390 390" width="130" height="130">
            <path d="M43 230H148L163 325H50ZM43 230L72 180H176L148 230M176 178L193 272L163 325" fill="none" stroke="#bdbdbd" stroke-width="3" />
            <path d="M104 205H116L100 120L110 126L91 88L84 132L94 126Z" fill="#1433b8" />
            <path d="M168 246H246V238L296 250L246 263V258H168Z" fill="#2f9a3a" />
            <path d="M168 253H246V263L270 256H168Z" fill="#175a20" />
            <path d="M98 272L107 280L88 315L92 322L66 336L67 310L75 305Z" fill="#e03434" />
            <text x="74" y="72" class="tl" fill="#1a3ae0">Z</text>
            <text x="310" y="262" class="tl" fill="#2f9a3a">Y</text>
            <text x="46" y="364" class="tl" fill="#d83030">X</text>
          </svg>
        </div>
      </div>
    </main>

    <footer class="status">
      <span class="st1">选择对象并使用 MB3 , 或者双击某一对象</span>
      <span class="st2">该操作重置恢复数据</span>
    </footer>

    <div class="taskbar">
      <span class="orb"><Ic n="orb" :s="40" /></span>
      <span v-for="a in plainApps" :key="a" class="tapp"><Ic :n="a" :s="30" /></span>
      <div class="glass">
        <span v-for="a in glassApps" :key="a[0]" class="gbtn" :class="{ hot: a[1] }"><Ic :n="a[0]" :s="30" /></span>
      </div>
      <div class="tray">
        <span class="tr"><Ic n="kb" :s="22" /></span>
        <span class="tr"><Ic n="help" :s="20" /></span>
        <span class="trpair"><Ic n="win1" :s="12" /><i class="tri"></i></span>
        <i class="tri flip"></i>
        <span v-for="t in tray2" :key="t" class="tr2"><Ic :n="t" :s="20" /></span>
        <div class="clock"><span>14:55</span><span>2021/4/20</span></div>
        <span class="desk"></span>
      </div>
    </div>

    <div class="wmline"></div>
    <div class="wm" aria-hidden="true">
      <svg viewBox="0 0 72 82" width="72" height="82">
        <path d="M36 0L72 20V62L36 82L0 62V20Z" fill="#6fc8f4" opacity=".62" />
        <path d="M36 0L50 8C30 10 14 24 10 44L0 62V20Z" fill="#cfeefc" opacity=".7" />
        <path d="M36 21L54 31V52L36 62L18 52V31Z" fill="#fff" opacity=".85" />
        <path d="M36 27L49 34L36 42L23 34Z" fill="#fff" />
        <path d="M23 37L34 44V56L23 50Z" fill="#bfe6f9" />
        <path d="M38 44L49 37V50L38 56Z" fill="#8fd3f6" />
      </svg>
      <span class="wmt">WWW.3DSJW.COM</span>
    </div>
  </div>
</template>

<style>
html, body { margin: 0; padding: 0; overflow: hidden; background: #fff; }
</style>

<style scoped>
.app {
  width: 1600px; height: 900px; display: flex; flex-direction: column; position: relative; overflow: hidden;
  font-family: "Noto Sans CJK SC", "Noto Sans", sans-serif; color: #222; background: #fff;
}
.defs { position: absolute; }
svg { display: block; flex: none; }
i { display: block; }

.head { height: 56px; background: linear-gradient(90deg, #09618a 0%, #1a749a 55%, #2c87a8 100%); color: #fff; flex: none; }
.title { height: 28px; display: flex; align-items: center; box-sizing: border-box; padding-bottom: 2px; }
.logo { width: 40px; padding-left: 4px; box-sizing: border-box; font: 700 22px/26px "Liberation Sans", sans-serif; }
.qsep { width: 1px; height: 20px; background: #2b7f9f; flex: none; }
.qcell { height: 26px; display: flex; align-items: center; justify-content: center; flex: none; }
.qtext { font-size: 11px; width: 22px; text-align: center; white-space: nowrap; flex: none; }
.tri { width: 0; height: 0; border-left: 3.5px solid transparent; border-right: 3.5px solid transparent; border-top: 4px solid #fff; }
.dimtri { border-top-color: #5a9ab4; }
.bartri { box-shadow: 0 -2px 0 -1px #fff; }
.tri.dark { border-top-color: #222; }
.tri.flip { border-top: none; border-bottom: 5px solid #fff; border-left-width: 5px; border-right-width: 5px; margin: 0 6px 0 5px; flex: none; }
.wintitle { margin-left: 494px; font-size: 12px; white-space: nowrap; line-height: 20px; padding-bottom: 1px; }
.siemens { margin-left: auto; font: 700 12.5px "Liberation Sans", sans-serif; letter-spacing: .6px; margin-right: 21px; padding-top: 3px; }
.ctrl { width: 23px; height: 26px; display: flex; align-items: center; justify-content: center; }

.menu { height: 28px; display: flex; align-items: stretch; font-size: 13px; line-height: 23px; }
.mfile { padding-left: 21px; width: 86px; box-sizing: border-box; white-space: nowrap; }
.mitem { width: 58px; text-align: center; box-sizing: border-box; white-space: nowrap; }
.mitem.wide { width: 84px; }
.mitem.on { color: #fcc931; border-bottom: 3px solid #fcc931; }
.mright { margin-left: auto; display: flex; align-items: center; padding-bottom: 3px; box-sizing: border-box; }
.search { width: 29px; height: 21px; overflow: hidden; background: #fff; border: 1px solid #777; box-sizing: border-box; color: #999; font-size: 12px; line-height: 19px; white-space: nowrap; padding-left: 1px; }
.pan { width: 103px; height: 25px; display: flex; border-radius: 3px; overflow: hidden; background: #1a9cf5; border: 1px solid #1a9cf5; box-sizing: border-box; }
.panic { width: 29px; display: flex; align-items: center; justify-content: center; }
.pantx { flex: 1; background: linear-gradient(90deg, #e4f6fe, #bde7fb); color: #fff; font-size: 11px; font-weight: 700; line-height: 23px; text-align: center; }
.mbtn { width: 25px; display: flex; justify-content: center; }
.mbtn.first { margin-left: 4px; }
.dot { width: 13px; height: 13px; border-radius: 50%; background: #868686; margin: 0 7px 0 9px; }

.ribbon { height: 94px; display: flex; flex: none; background: #fff; border-bottom: 1px solid #dcdcdc; box-sizing: border-box; padding-top: 5px; padding-bottom: 3px; }
.grp { display: flex; flex-direction: column; flex: none; box-sizing: border-box; border-right: 1px solid #dadada; font-size: 11px; line-height: 14px; }
.grp.last { flex: 1; border-right: 0; }
.body { height: 71px; display: flex; }
.foot { flex: 1; display: flex; align-items: center; color: #0f6e96; font-size: 11px; min-width: 0; }
.foot span { flex: 1; text-align: center; white-space: nowrap; overflow: hidden; }
.foot .tri { margin: 0 7.5px 0 3.5px; }
.leftcol { width: 71px; flex: none; padding-left: 15px; box-sizing: border-box; }
.lr { height: 35px; display: flex; align-items: center; gap: 6px; margin-top: -1px; }
.lr.l2 { margin-top: -2px; }
.big { display: flex; flex-direction: column; align-items: center; flex: none; gap: 4px; white-space: nowrap; padding-top: 1px; }
.list { flex: none; margin-top: -4px; }
.l1 { margin-left: 6px; width: 124px; }
.l2c { width: 91px; }
.lrow { height: 23px; display: flex; align-items: center; gap: 3px; white-space: nowrap; }
.l3c { margin-left: 3px; margin-top: -2px; }
.mrow { height: 35px; display: flex; align-items: center; gap: 4px; white-space: nowrap; }
.sync { padding-left: 10px; }
.sc1 { width: 60px; margin-top: -2px; flex: none; }
.sc2 { width: 26px; margin-top: -1px; display: flex; flex-direction: column; align-items: flex-start; gap: 4px; flex: none; }
.sc3 { display: flex; flex-direction: column; gap: 9px; margin-top: 2px; }
.cells { flex-direction: column; padding-top: 1px; box-sizing: border-box; }
.crow { height: 30px; display: flex; align-items: center; }
.cell { width: 23px; display: flex; justify-content: center; flex: none; }
.csep { width: 1px; height: 24px; margin: 0 2px; background: #d4d4d4; flex: none; }

.work { flex: 1; display: flex; min-height: 0; }
.side { width: 32px; background: #dcdcdc; display: flex; flex-direction: column; align-items: center; flex: none; margin-right: 6px; }
.sgear { height: 24px; padding-right: 2px; display: flex; align-items: center; justify-content: center; margin-bottom: 2px; }
.sactive { margin-top: 14px; width: 31px; height: 46px; margin-left: 1px; box-sizing: border-box; background: #fff; border: 1px solid #b8b8b8; border-right: 0; display: flex; align-items: center; justify-content: center; flex: none; }
.sitem { display: block; flex: none; position: relative; left: 1px; }
.mainc { flex: 1; display: flex; flex-direction: column; min-width: 0; }
.tabs { height: 24px; display: flex; border-bottom: 2px solid #05628b; flex: none; }
.tab { width: 133px; display: flex; align-items: center; padding-left: 6px; box-sizing: border-box; font-size: 12px; gap: 3px; white-space: nowrap; }
.tab.act { width: 128px; background: #05628b; color: #fff; padding-left: 5px; gap: 4px; }
.tabt { line-height: 24px; margin-right: 2px; }
.x { font-size: 11px; line-height: 24px; }
.canvas { flex: 1; position: relative; border-left: 1px solid #dcdcdc; }
.model { position: absolute; left: 591px; top: 164px; }
.triad { position: absolute; left: 51px; top: 484px; }
.wcs { font: 42px "Liberation Sans", sans-serif; }
.tl { font: 36px "Liberation Sans", sans-serif; }

.status { height: 22px; flex: none; border-top: 1px solid #b4b4b4; background: #fff; display: flex; align-items: center; font-size: 11px; font-weight: 500; color: #222; box-sizing: border-box; padding-bottom: 4px; }
.st1 { padding-left: 3px; width: 773px; box-sizing: border-box; white-space: nowrap; }
.taskbar { height: 39px; flex: none; display: flex; align-items: center; position: relative; overflow: hidden; border-top: 1px solid #0e3c60;
  background: linear-gradient(90deg, #1a68a2 0%, #3a98d0 12%, #52acdc 26%, #2f86c0 45%, #2374b0 65%, #1c5e98 82%, #15497a 100%); }
.taskbar::after { content: ""; position: absolute; left: 1090px; top: 0; width: 70px; height: 100%; transform: skewX(60deg); background: linear-gradient(90deg, transparent, rgba(255,255,255,.45), transparent); pointer-events: none; }
.orb { width: 67px; padding-left: 7px; box-sizing: border-box; flex: none; }
.tapp { width: 62px; display: flex; justify-content: center; flex: none; position: relative; left: -8px; }
.glass { display: flex; gap: 4px; margin-left: -7px; z-index: 1; }
.gbtn { width: 58px; height: 37px; box-sizing: border-box; border: 1px solid rgba(255,255,255,.4); border-radius: 3px; display: flex; align-items: center; justify-content: center;
  background: linear-gradient(180deg, rgba(255,255,255,.35), rgba(255,255,255,.08) 50%, rgba(255,255,255,.2)); }
.gbtn.hot { background: linear-gradient(180deg, rgba(255,255,255,.6), rgba(255,255,255,.25)); }
.tray { margin-left: auto; display: flex; align-items: center; color: #fff; z-index: 1; height: 100%; }
.tr { width: 22px; display: flex; justify-content: center; flex: none; }
.tr2 { width: 24px; display: flex; justify-content: center; flex: none; }
.trpair { width: 20px; display: flex; flex-direction: column; align-items: center; gap: 4px; flex: none; }
.clock { width: 72px; display: flex; flex-direction: column; align-items: center; font-size: 12px; line-height: 17px; font-family: "Noto Sans", sans-serif; margin-left: 8px; margin-right: 3px; }
.desk { width: 14px; height: 100%; border: 1px solid rgba(255,255,255,.45); box-sizing: border-box; background: linear-gradient(180deg, rgba(255,255,255,.4), rgba(255,255,255,.1)); }

.wmline { position: absolute; left: 1405px; top: 836px; width: 165px; height: 5px; z-index: 2; background: repeating-linear-gradient(90deg, rgba(255,255,255,.85) 0 22px, transparent 22px 27px); pointer-events: none; }
.wm { position: absolute; left: 1317px; top: 805px; display: flex; pointer-events: none; z-index: 3; }
.wmt { position: absolute; left: 81px; top: 54px; font: 700 15px "Liberation Sans", sans-serif; letter-spacing: 2.6px; color: rgba(255,255,255,.38); white-space: nowrap; }
</style>
